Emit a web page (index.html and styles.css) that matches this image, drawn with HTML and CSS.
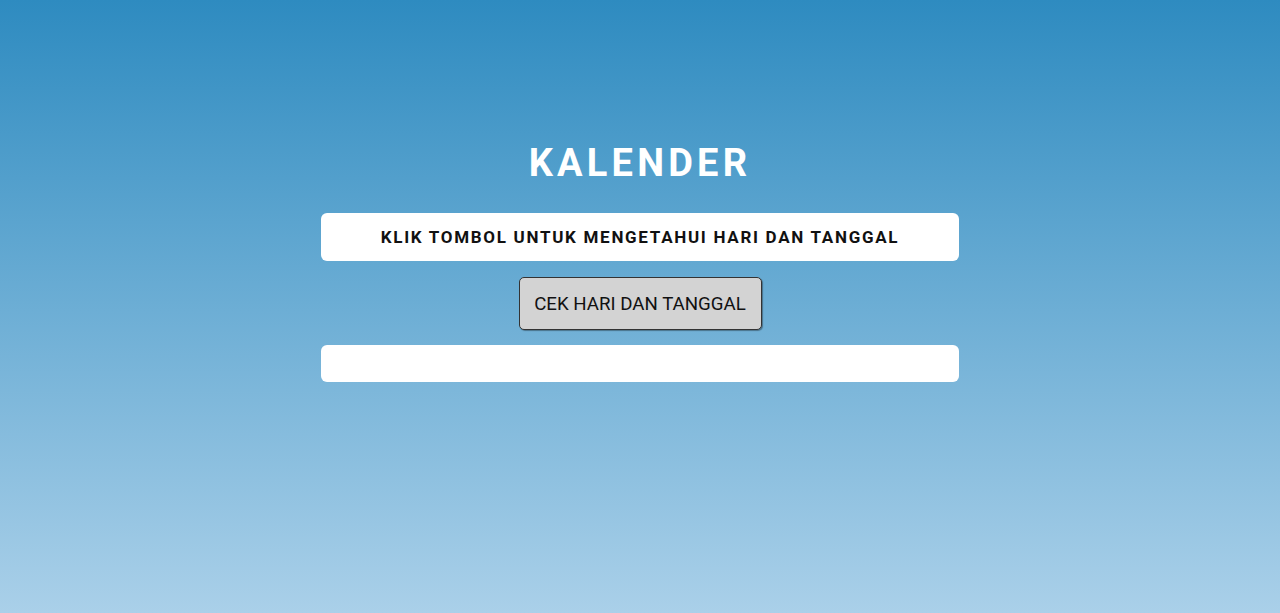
FILE: index.html
```html
<!DOCTYPE html>
<html lang="id">
<head>
<meta charset="utf-8">
<title>Kalender</title>
<link rel="stylesheet" href="styles.css">
</head>
<body>
<main class="app">
  <h1 class="title">KALENDER</h1>
  <div class="panel panel-info">KLIK TOMBOL UNTUK MENGETAHUI HARI DAN TANGGAL</div>
  <button class="btn" type="button">CEK HARI DAN TANGGAL</button>
  <div class="panel panel-result"></div>
</main>
</body>
</html>
```
FILE: styles.css
```css
html, body {
  margin: 0;
  padding: 0;
  height: 100%;
}
body {
  background: linear-gradient(to bottom, #2e8bc0 0%, #aad0e9 100%);
  font-family: Roboto, "Liberation Sans", sans-serif;
  min-height: 613px;
}
.app {
  display: flex;
  flex-direction: column;
  align-items: center;
  padding-top: 141px;
}
.title {
  margin: 0;
  color: #ffffff;
  font-size: 38px;
  font-weight: 700;
  letter-spacing: 4.2px;
  line-height: 44px;
}
.panel {
  width: 638px;
  background: #ffffff;
  border-radius: 6px;
  box-sizing: border-box;
}
.panel-info {
  margin-top: 28px;
  height: 48px;
  display: flex;
  align-items: center;
  justify-content: center;
  font-size: 17px;
  font-weight: 700;
  letter-spacing: 1.7px;
  color: #111111;
}
.btn {
  margin-top: 16px;
  width: 243px;
  height: 53px;
  background: #d3d3d3;
  border: 1.5px solid #333333;
  border-radius: 5px;
  font-family: Roboto, "Liberation Sans", sans-serif;
  font-size: 18.7px;
  color: #111111;
  padding: 0;
  box-shadow: 1px 1px 1px rgba(0,0,0,0.35);
}
.panel-result {
  margin-top: 15px;
  height: 37px;
}
```
